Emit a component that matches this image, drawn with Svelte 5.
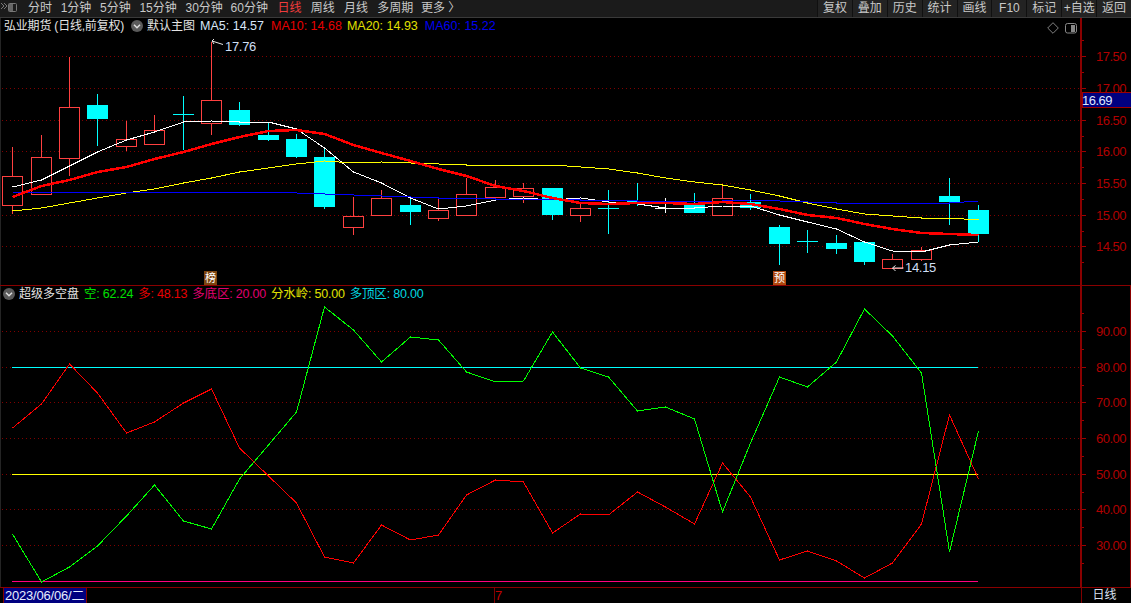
<script>
  const leftTabs = ['分时','1分钟','5分钟','15分钟','30分钟','60分钟','日线','周线','月线','多周期','更多 〉'];
  const rightTabs = ['复权','叠加','历史','统计','画线','F10','标记','+自选','返回'];
  const xs = [12,41,69,97,126,154,183,211,239,268,296,324,353,381,410,438,466,495,523,552,580,608,637,665,694,722,750,779,807,836,864,892,921,949,978];
  // top, bottom, wick top, wick bottom, kind (r hollow red, c cyan, w white)
  const candles = [
    [176,205,147,214,'r'],[157,194,135,194,'r'],[107,158,57,176,'r'],[105,119,94,146,'c'],[139,146,121,151,'r'],
    [130,144,115,144,'r'],[114,114,96,150,'c'],[100,123,42,135,'r'],[110,125,102,126,'c'],[135,140,122,141,'c'],
    [139,157,134,158,'c'],[157,207,147,209,'c'],[216,227,197,235,'r'],[198,215,190,215,'r'],[205,212,198,225,'c'],
    [210,218,197,221,'r'],[194,215,178,215,'r'],[187,197,180,197,'r'],[188,196,183,203,'r'],[188,215,188,220,'c'],
    [208,215,204,222,'r'],[208,208,190,234,'c'],[201,202,183,206,'c'],[208,208,198,213,'w'],[205,213,193,213,'c'],
    [198,215,184,215,'r'],[202,208,194,210,'c'],[227,244,225,265,'c'],[241,241,230,253,'c'],[243,249,235,254,'c'],
    [242,262,242,265,'c'],[259,268,254,268,'r'],[250,259,247,261,'r'],[196,202,178,225,'c'],[210,234,205,242,'c']
  ];
  const pts = (ys) => ys.map((y, i) => `${xs[i] + 0.5},${y}`).join(' ');
  const ma5 = [187,180,166,152,140,132,122,121,122,122,129,148,172,183,198,209,206,200,198,200,198,202,204,208,208,206,206,215,222,229,242,251,252,245,242];
  const ma10 = [197,186,180,172,167,159,152,144,137,131,130,134,145,153,161,169,176,186,191,198,203,204,203,203,204,202,204,209,215,218,224,229,233,234,235];
  const ma20 = [211,208,203,198,193,189,183,178,172,168,164,161,163,162,163,164,165,165,165,165,167,169,173,178,182,185,190,196,203,209,214,216,218,218,220];
  const ma60 = [192,192,192,192,192,192,192,192,192,192,193,194,195,196,197,198,198,199,199,199,200,200,201,201,201,201,200,201,202,203,203,203,203,203,201];
  const green = [534,582,567,546,516,485,521,529,479,445,412,307,330,362,337,340,372,382,381,332,368,377,411,407,419,512,443,377,387,362,309,336,373,552,431];
  const red = [428,404,364,393,433,422,403,389,448,476,503,557,563,525,540,535,495,480,482,533,514,515,492,507,524,463,497,560,551,561,578,563,524,415,479];
  const grid1 = [56,88,120,151,183,215,246];
  const labels1 = ['17.50','17.00','16.50','16.00','15.50','15.00','14.50'];
  const grid2 = [331,367,402,438,474,509,545];
  const labels2 = ['90.00','80.00','70.00','60.00','50.00','40.00','30.00'];
  const minor1 = [40,72,104,136,167,199,231,262];
  const minor2 = [313,349,385,420,456,492,527,563];
  const twoChar = ['日线','周线','月线'];
</script>

<div class="app">
  <header class="toolbar">
    <div class="tabs">
      <svg class="corner" viewBox="0 0 18 17" width="18" height="17" aria-hidden="true">
        <path d="M1 3l3 3-3 3M4 3l3 3-3 3" fill="none" stroke="#777" stroke-width="1"/>
        <rect x="8.5" y="3.5" width="8" height="8" rx="1" fill="none" stroke="#777"/>
        <rect x="9" y="4" width="4" height="7" fill="#666"/>
      </svg>
      {#each leftTabs as t}
        <span
          class="tab"
          class:active={t === '日线'}
          class:two={twoChar.includes(t)}
          class:sixty={t === '60分钟'}
          class:multi={t === '多周期'}
        >{t}</span>
      {/each}
    </div>
    <div class="buttons">
      {#each rightTabs as t}
        <span class="btn">{t}</span>
      {/each}
    </div>
  </header>

  <section class="pane top">
    <div class="plot">
      <svg class="chart" viewBox="1 18 1079 267" width="1079" height="267" aria-hidden="true">
        {#each grid1 as y}
          <line class="dots" x1="2" x2="1080" y1={y + 0.5} y2={y + 0.5}/>
        {/each}
        {#each candles as c, i}
          {@const x = xs[i]}
          {#if c[4] === 'r'}
            <line class="wick red" x1={x + 0.5} x2={x + 0.5} y1={c[2]} y2={c[0]}/>
            <line class="wick red" x1={x + 0.5} x2={x + 0.5} y1={c[1]} y2={c[3]}/>
            <rect class="hollow" x={x - 9.5} y={c[0] + 0.5} width="20" height={c[1] - c[0]}/>
          {:else}
            <line class="wick {c[4] === 'w' ? 'white' : 'cyan'}" x1={x + 0.5} x2={x + 0.5} y1={c[2]} y2={c[3]}/>
            <rect class={c[4] === 'w' ? 'solidw' : 'solid'} x={x - 10} y={c[0]} width="21" height={Math.max(c[1] - c[0], 1)}/>
          {/if}
        {/each}
        <polyline class="ln" stroke="#ffffff" points={pts(ma5)}/>
        <polyline class="ln" stroke="#ffff00" points={pts(ma20)}/>
        <polyline class="ln" stroke="#0000ff" points={pts(ma60)}/>
        <polyline class="ln" stroke="#ff0000" stroke-width="2.500" points={pts(ma10)}/>
        <path class="arrow" d="M212 41l11 3.5M212 41l2 -2M212 41l2 3"/>
        <path class="arrow" d="M892.5 268h11M892.5 268l3 -2.500M892.5 268l3 3"/>
      </svg>
      <div class="legend main">
        <span class="name title">弘业期货 (日线,前复权)</span>
        <svg class="chev first" viewBox="0 0 12 12" width="12" height="12" aria-hidden="true">
          <circle cx="6" cy="6" r="6" fill="#5a5a5a"/>
          <path d="M3 4.800l3 3 3-3" fill="none" stroke="#ddd" stroke-width="1.500"/>
        </svg>
        <span class="name">默认主图</span>
        <span class="val w">MA5: 14.57</span>
        <span class="val r wide">MA10: 14.68</span>
        <span class="val y">MA20: 14.93</span>
        <span class="val b wide">MA60: 15.22</span>
      </div>
      <span class="note hi">17.76</span>
      <span class="note lo">14.15</span>
      <span class="badge bang">榜</span>
      <span class="badge yu">预</span>
      <svg class="diamond" viewBox="0 0 12 12" width="12" height="12" aria-hidden="true">
        <path d="M6 .7L11.300 6 6 11.300 .7 6z" fill="none" stroke="#808080"/>
      </svg>
      <svg class="split" viewBox="0 0 13 11" width="13" height="11" aria-hidden="true">
        <rect x=".5" y=".5" width="11" height="9.500" rx="2" fill="none" stroke="#888"/>
        <rect x="6" y="2" width="4" height="7" fill="#888"/>
      </svg>
    </div>
    <div class="axis">
      <svg viewBox="1082 18 49 267" width="49" height="267">
        {#each grid1 as y, i}
          <line class="tick" x1="1082" x2="1086" y1={y + 0.5} y2={y + 0.5}/>
          <text class="lbl" x="1126" y={y + 5}>{labels1[i]}</text>
        {/each}
        {#each minor1 as y}
          <line class="tick" x1="1082" x2="1084" y1={y + 0.5} y2={y + 0.5}/>
        {/each}
        <rect class="tag" x="1082" y="92.500" width="49" height="15"/>
        <text class="tagtext" x="1082" y="105">16.69</text>
      </svg>
    </div>
  </section>

  <section class="pane bottom">
    <div class="plot">
      <svg class="chart" viewBox="1 286 1079 301" width="1079" height="301" aria-hidden="true">
        {#each grid2 as y}
          <line class="dots" x1="2" x2="1080" y1={y + 0.5} y2={y + 0.5}/>
        {/each}
        <line class="ln" stroke="#00ffff" x1="12" x2="978" y1="367.500" y2="367.500"/>
        <line class="ln" stroke="#ffff00" x1="12" x2="978" y1="474.500" y2="474.500"/>
        <line class="ln" stroke="#ff0080" x1="12" x2="978" y1="581.500" y2="581.500"/>
        <polyline class="ln" stroke="#ff0000" points={pts(red)}/>
        <polyline class="ln" stroke="#00ff00" points={pts(green)}/>
      </svg>
      <div class="legend sub">
        <svg class="chev tight" viewBox="0 0 12 12" width="12" height="12" aria-hidden="true">
          <circle cx="6" cy="6" r="6" fill="#5a5a5a"/>
          <path d="M3 4.800l3 3 3-3" fill="none" stroke="#ddd" stroke-width="1.500"/>
        </svg>
        <span class="name">超级多空盘</span>
        <span class="val g">空: 62.24</span>
        <span class="val r">多: 48.13</span>
        <span class="val p">多底区: 20.00</span>
        <span class="val y">分水岭: 50.00</span>
        <span class="val c">多顶区: 80.00</span>
      </div>
    </div>
    <div class="axis edge">
      <svg viewBox="1082 286 48 301" width="48" height="301">
        {#each grid2 as y, i}
          <line class="tick" x1="1082" x2="1086" y1={y + 0.5} y2={y + 0.5}/>
          <text class="lbl" x="1126" y={y + 5}>{labels2[i]}</text>
        {/each}
        {#each minor2 as y}
          <line class="tick" x1="1082" x2="1084" y1={y + 0.5} y2={y + 0.5}/>
        {/each}
      </svg>
    </div>
  </section>

  <footer class="footer">
    <span class="date">2023/06/06/二</span>
    <span class="month">7</span>
    <span class="period">日线</span>
  </footer>
</div>

<style>
  :global(body) {
    margin: 0;
    background: #000;
  }
  .app {
    width: 1131px;
    height: 603px;
    overflow: hidden;
    background: #000;
    display: flex;
    flex-direction: column;
    font-family: "Liberation Sans", "Noto Sans CJK SC", sans-serif;
    font-size: 12px;
    color: #d0d0d0;
  }
  .toolbar {
    height: 18px;
    box-sizing: border-box;
    flex: none;
    display: flex;
    justify-content: space-between;
    background: #1b1b1b;
    border-bottom: 1px solid #3a3a3a;
  }
  .tabs {
    display: flex;
    align-items: center;
    gap: 8.7px;
  }
  .corner {
    margin-right: 1.300px;
    flex: none;
  }
  .tab {
    line-height: 17px;
    color: #c8c8c8;
    white-space: pre;
  }
  .tab.active {
    color: #f03c3c;
  }
  .tab.sixty {
    margin-left: -1px;
    margin-right: 1px;
  }
  .tab.two {
    margin-right: 0.5px;
  }
  .tab.multi {
    margin-right: -1px;
  }
  .buttons {
    display: flex;
    width: 314px;
  }
  .btn {
    flex: 1;
    text-align: center;
    line-height: 16px;
    color: #c8c8c8;
    background: #232323;
    border-left: 1px solid #101010;
    white-space: nowrap;
  }
  .pane {
    display: flex;
    flex: none;
    box-sizing: border-box;
    border-bottom: 1px solid #8a0000;
  }
  .pane.top {
    height: 268px;
  }
  .pane.bottom {
    height: 302px;
  }
  .plot {
    position: relative;
    width: 1080px;
    flex: none;
    box-sizing: border-box;
    border-left: 1px solid #242424;
  }
  .chart {
    display: block;
  }
  .axis {
    flex: 1;
    border-left: 2px solid #8a0000;
  }
  .axis.edge {
    border-right: 1px solid #8a0000;
  }
  .axis svg {
    display: block;
  }
  .dots {
    stroke: #800000;
    stroke-width: 1;
    stroke-dasharray: 1 3;
    shape-rendering: crispEdges;
  }
  .wick {
    stroke-width: 1;
    shape-rendering: crispEdges;
  }
  .wick.red { stroke: #ff4040; }
  .wick.cyan { stroke: #00ffff; }
  .wick.white { stroke: #ffffff; }
  .hollow {
    fill: #000;
    stroke: #ff4040;
    stroke-width: 1;
    shape-rendering: crispEdges;
  }
  .solid {
    fill: #00ffff;
    shape-rendering: crispEdges;
  }
  .solidw {
    fill: #ffffff;
    shape-rendering: crispEdges;
  }
  .ln {
    fill: none;
    shape-rendering: crispEdges;
  }
  .arrow {
    fill: none;
    stroke: #e8e8e8;
    stroke-width: 1;
  }
  .tick {
    stroke: #a00000;
    stroke-width: 1;
    shape-rendering: crispEdges;
  }
  .lbl {
    fill: #b00000;
    font-size: 13px;
    letter-spacing: -0.5px;
    text-anchor: end;
    font-family: "Liberation Sans", sans-serif;
  }
  .tag {
    fill: #000080;
    stroke: #a00000;
    stroke-width: 1;
    shape-rendering: crispEdges;
  }
  .tagtext {
    fill: #dfe8ff;
    font-size: 13px;
    letter-spacing: -0.500px;
    font-family: "Liberation Sans", sans-serif;
  }
  .legend {
    position: absolute;
    display: flex;
    align-items: center;
    white-space: nowrap;
    line-height: 14px;
  }
  .legend.main {
    top: 1px;
    left: 3px;
    gap: 5px;
  }
  .legend.sub {
    top: 1px;
    left: 2px;
    gap: 5px;
  }
  .chev {
    flex: none;
  }
  .chev.first {
    margin-left: 2px;
    margin-right: -1px;
  }
  .chev.tight {
    margin-right: -1px;
  }
  .name {
    color: #e4e4e4;
  }
  .name.title {
    letter-spacing: -0.2px;
  }
  .val {
    font-size: 12.500px;
  }
  .val.wide {
    margin-left: 2px;
  }
  .legend.sub .val {
    letter-spacing: -0.2px;
  }
  .val.w { color: #d8e6f8; }
  .val.r { color: #e80000; }
  .val.y { color: #e0e000; }
  .val.b { color: #0000f0; }
  .val.g { color: #00e000; }
  .val.p { color: #e00070; }
  .val.c { color: #00d8e0; }
  .note {
    position: absolute;
    color: #cfdff5;
    font-size: 13px;
    line-height: 14px;
    letter-spacing: -0.300px;
  }
  .note.hi {
    left: 224px;
    top: 22px;
  }
  .note.lo {
    left: 904px;
    top: 243px;
  }
  .badge {
    position: absolute;
    top: 253px;
    width: 13px;
    height: 14px;
    line-height: 14px;
    text-align: center;
    font-size: 11px;
    color: #fff;
  }
  .badge.bang {
    left: 203px;
    background: #7c4410;
  }
  .badge.yu {
    left: 772px;
    background: #b0480e;
  }
  .diamond {
    position: absolute;
    left: 1046px;
    top: 4px;
  }
  .split {
    position: absolute;
    left: 1064px;
    top: 5px;
  }
  .footer {
    flex: 1;
    display: flex;
    align-items: stretch;
    line-height: 15px;
  }
  .date {
    margin-left: 3px;
    width: 84px;
    box-sizing: border-box;
    padding-left: 1px;
    background: #000080;
    color: #e6eeff;
    font-size: 13px;
    letter-spacing: -0.200px;
    border-left: 1px solid #800000;
    border-right: 1px solid #800000;
    white-space: nowrap;
    overflow: hidden;
  }
  .month {
    margin-left: 407px;
    color: #c00000;
    font-size: 13px;
    border-left: 1px solid #800000;
  }
  .period {
    margin-left: auto;
    width: 50px;
    box-sizing: border-box;
    padding-right: 4px;
    text-align: center;
    color: #d8e0f0;
    font-size: 12px;
    border-left: 1px solid #800000;
  }
</style>
